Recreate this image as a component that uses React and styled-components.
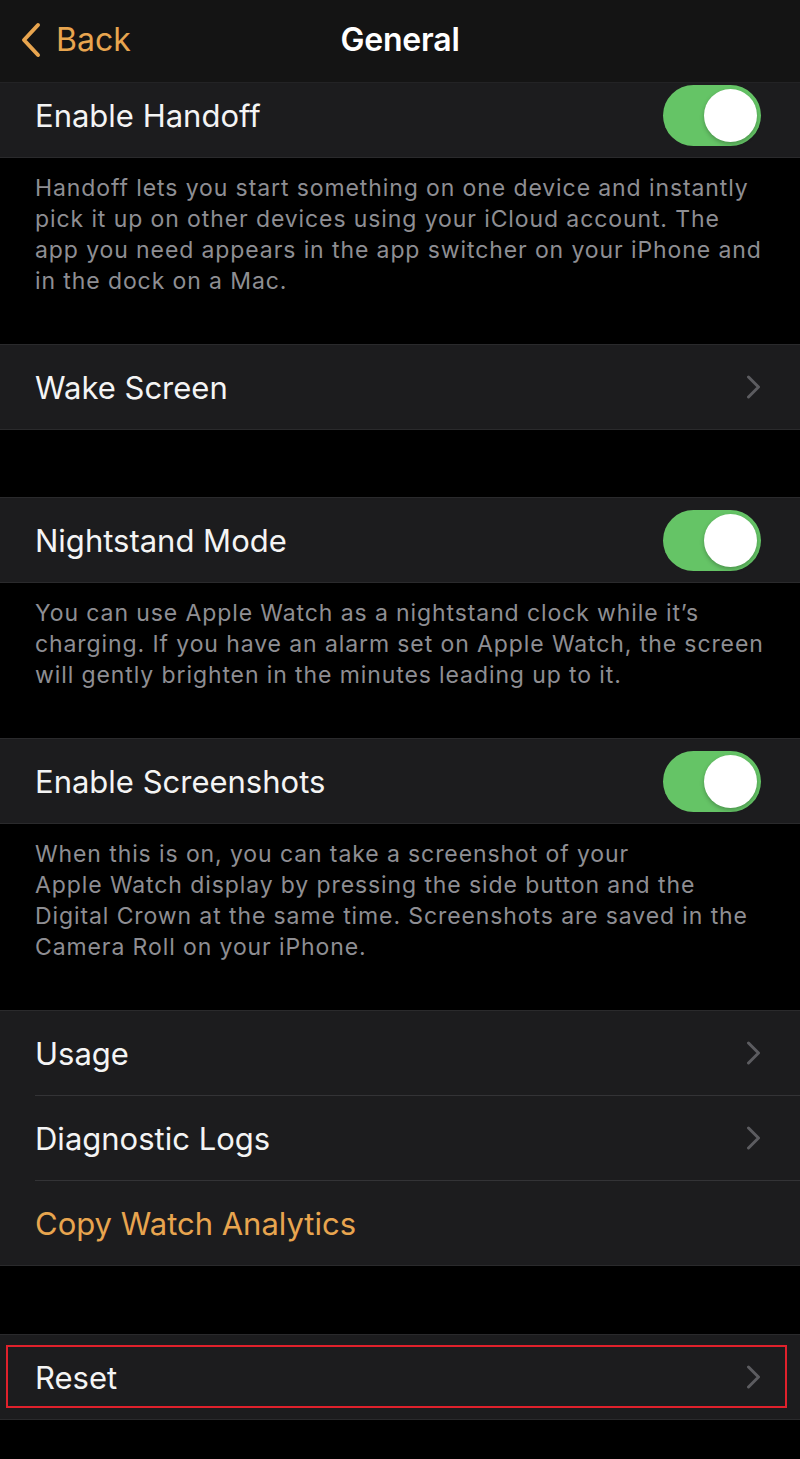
import React from "react";
import styled, { createGlobalStyle } from "styled-components";

const GlobalStyle = createGlobalStyle`
  html, body {
    margin: 0;
    padding: 0;
    background: #000;
  }
  body {
    font-family: Inter, "Noto Sans", "DejaVu Sans", sans-serif;
    -webkit-font-smoothing: antialiased;
  }
`;

const Page = styled.div`
  width: 800px;
  min-height: 1459px;
  background: #000;
`;

const NavBar = styled.div`
  height: 82px;
  display: grid;
  grid-template-columns: 1fr auto 1fr;
  align-items: center;
  background: #141414;
  border-bottom: 1px solid #232325;
`;

const BackButton = styled.div`
  display: flex;
  align-items: center;
  gap: 14px;
  padding-left: 20px;
  padding-bottom: 3px;
  color: #e8a54f;
  font-size: 32px;
`;

const Title = styled.div`
  color: #fff;
  font-size: 32px;
  font-weight: 600;
  letter-spacing: -0.2px;
  padding-bottom: 3px;
`;

const Group = styled.div`
  background: #1c1c1e;
  border-top: ${(p) => (p.$noTop ? "none" : "1px solid #2a2a2c")};
  border-bottom: 1px solid #2a2a2c;
  margin-top: ${(p) => p.$gap || 0}px;
`;

const Row = styled.div`
  position: relative;
  height: ${(p) => p.$height || 84}px;
  padding-left: 35px;
  display: flex;
`;

const RowBody = styled.div`
  flex: 1;
  display: flex;
  align-items: center;
  justify-content: space-between;
  padding-right: 39px;
  padding-bottom: ${(p) => p.$lift || 0}px;
  border-top: ${(p) => (p.$divider ? "1px solid #333336" : "none")};
`;

const Label = styled.span`
  color: ${(p) => (p.$accent ? "#e8a54f" : "#f4f4f4")};
  font-size: 31px;
`;

const Footer = styled.div`
  padding: 15px 35px 47px;
  color: #8e8e93;
  font-size: 23px;
  line-height: 31px;
  letter-spacing: 0.9px;
  white-space: nowrap;
`;

const Track = styled.div`
  width: 98px;
  height: 61px;
  border-radius: 31px;
  background: #65c466;
  display: flex;
  align-items: center;
  justify-content: flex-end;
  padding: 0 4px;
  box-sizing: border-box;
`;

const Knob = styled.div`
  width: 53px;
  height: 53px;
  border-radius: 50%;
  background: #fff;
  box-shadow: 0 2px 4px rgba(0, 0, 0, 0.25);
`;

const Highlight = styled.div`
  position: absolute;
  left: 6px;
  right: 13px;
  top: 10px;
  bottom: 11px;
  border: 2px solid #e0212c;
  pointer-events: none;
`;

const BackChevron = () => (
  <svg width="22" height="36" viewBox="0 0 22 36">
    <path d="M18 3 L4 18 L18 33" fill="none" stroke="#e8a54f" strokeWidth="4" strokeLinecap="round" strokeLinejoin="round" />
  </svg>
);

const Chevron = () => (
  <svg width="15" height="24" viewBox="0 0 15 24">
    <path d="M2.5 2 L12.5 12 L2.5 22" fill="none" stroke="#5c5c60" strokeWidth="3" strokeLinecap="round" strokeLinejoin="round" />
  </svg>
);

const Toggle = () => (
  <Track>
    <Knob />
  </Track>
);

const Lines = ({ lines }) =>
  lines.map((l, i) => (
    <React.Fragment key={i}>
      {l}
      {i < lines.length - 1 && <br />}
    </React.Fragment>
  ));

export default function App() {
  return (
    <Page>
      <GlobalStyle />
      <NavBar>
        <BackButton>
          <BackChevron />
          Back
        </BackButton>
        <Title>General</Title>
        <div />
      </NavBar>

      <Group $noTop>
        <Row $height={74}>
          <RowBody $lift={10}>
            <Label>Enable Handoff</Label>
            <Toggle />
          </RowBody>
        </Row>
      </Group>
      <Footer>
        <Lines
          lines={[
            "Handoff lets you start something on one device and instantly",
            "pick it up on other devices using your iCloud account. The",
            "app you need appears in the app switcher on your iPhone and",
            "in the dock on a Mac.",
          ]}
        />
      </Footer>

      <Group>
        <Row>
          <RowBody>
            <Label>Wake Screen</Label>
            <Chevron />
          </RowBody>
        </Row>
      </Group>

      <Group $gap={67}>
        <Row>
          <RowBody>
            <Label>Nightstand Mode</Label>
            <Toggle />
          </RowBody>
        </Row>
      </Group>
      <Footer>
        <Lines
          lines={[
            "You can use Apple Watch as a nightstand clock while it’s",
            "charging. If you have an alarm set on Apple Watch, the screen",
            "will gently brighten in the minutes leading up to it.",
          ]}
        />
      </Footer>

      <Group>
        <Row>
          <RowBody>
            <Label>Enable Screenshots</Label>
            <Toggle />
          </RowBody>
        </Row>
      </Group>
      <Footer>
        <Lines
          lines={[
            "When this is on, you can take a screenshot of your",
            "Apple Watch display by pressing the side button and the",
            "Digital Crown at the same time. Screenshots are saved in the",
            "Camera Roll on your iPhone.",
          ]}
        />
      </Footer>

      <Group>
        <Row>
          <RowBody>
            <Label>Usage</Label>
            <Chevron />
          </RowBody>
        </Row>
        <Row $height={85}>
          <RowBody $divider>
            <Label>Diagnostic Logs</Label>
            <Chevron />
          </RowBody>
        </Row>
        <Row $height={85}>
          <RowBody $divider>
            <Label $accent>Copy Watch Analytics</Label>
          </RowBody>
        </Row>
      </Group>

      <Group $gap={68}>
        <Row>
          <RowBody>
            <Label>Reset</Label>
            <Chevron />
          </RowBody>
          <Highlight />
        </Row>
      </Group>
    </Page>
  );
}
